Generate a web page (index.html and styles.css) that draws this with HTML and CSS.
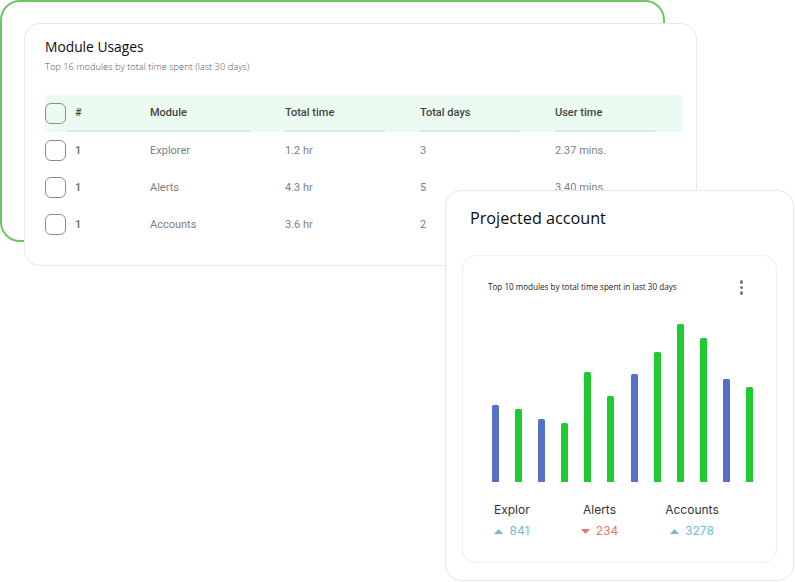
FILE: index.html
```html
<!DOCTYPE html>
<html>
<head>
<meta charset="utf-8">
<link rel="stylesheet" href="styles.css">
</head>
<body>
<div class="stage">
  <div class="green-frame"></div>

  <section class="card module-card">
    <h2 class="card-title">Module Usages</h2>
    <p class="card-sub">Top 16 modules by total time spent (last 30 days)</p>
    <div class="table">
      <div class="row head">
        <div class="cell check"><span class="box"></span></div>
        <div class="cell num">#</div>
        <div class="cell">Module</div>
        <div class="cell">Total time</div>
        <div class="cell">Total days</div>
        <div class="cell">User time</div>
      </div>
      <div class="row">
        <div class="cell check"><span class="box"></span></div>
        <div class="cell num">1</div>
        <div class="cell">Explorer</div>
        <div class="cell">1.2 hr</div>
        <div class="cell">3</div>
        <div class="cell">2.37 mins.</div>
      </div>
      <div class="row">
        <div class="cell check"><span class="box"></span></div>
        <div class="cell num">1</div>
        <div class="cell">Alerts</div>
        <div class="cell">4.3 hr</div>
        <div class="cell">5</div>
        <div class="cell">3.40 mins.</div>
      </div>
      <div class="row">
        <div class="cell check"><span class="box"></span></div>
        <div class="cell num">1</div>
        <div class="cell">Accounts</div>
        <div class="cell">3.6 hr</div>
        <div class="cell">2</div>
        <div class="cell">1.52 mins.</div>
      </div>
    </div>
  </section>

  <section class="card projected-card">
    <h2 class="proj-title">Projected account</h2>
    <div class="chart-card">
      <div class="chart-head">
        <span class="chart-sub">Top 10 modules by total time spent in last 30 days</span>
        <span class="kebab"><i></i><i></i><i></i></span>
      </div>
      <div class="bars">
        <span class="bar blue" style="height:77px"></span>
        <span class="bar green" style="height:73px"></span>
        <span class="bar blue" style="height:63px"></span>
        <span class="bar green" style="height:59px"></span>
        <span class="bar green" style="height:110px"></span>
        <span class="bar green" style="height:86px"></span>
        <span class="bar blue" style="height:108px"></span>
        <span class="bar green" style="height:130px"></span>
        <span class="bar green" style="height:158px"></span>
        <span class="bar green" style="height:144px"></span>
        <span class="bar blue" style="height:103px"></span>
        <span class="bar green" style="height:95px"></span>
      </div>
      <div class="legend">
        <div class="leg">
          <span class="leg-name">Explor</span>
          <span class="leg-val up"><svg width="9" height="5" viewBox="0 0 9 5"><polygon points="4.5,0 9,5 0,5"/></svg>841</span>
        </div>
        <div class="leg">
          <span class="leg-name">Alerts</span>
          <span class="leg-val down"><svg width="9" height="5" viewBox="0 0 9 5"><polygon points="0,0 9,0 4.5,5"/></svg>234</span>
        </div>
        <div class="leg">
          <span class="leg-name">Accounts</span>
          <span class="leg-val up"><svg width="9" height="5" viewBox="0 0 9 5"><polygon points="4.5,0 9,5 0,5"/></svg>3278</span>
        </div>
      </div>
    </div>
  </section>
</div>
</body>
</html>
```

FILE: styles.css
```css
* { box-sizing: border-box; }
html, body { margin: 0; padding: 0; background: #fff; }
.stage {
  position: relative;
  width: 795px;
  height: 582px;
  overflow: hidden;
  font-family: "Open Sans", "Liberation Sans", sans-serif;
}
.green-frame {
  position: absolute;
  left: 0; top: 0;
  width: 665px; height: 242px;
  border: 2px solid #6cc765;
  border-radius: 20px;
}
.card {
  position: absolute;
  background: #fff;
  border: 1px solid #e7e7e7;
  border-radius: 16px;
}
.module-card {
  left: 24px; top: 23px;
  width: 673px; height: 243px;
  padding: 14px 14px 0 20px;
}
.card-title {
  margin: 0;
  font-size: 13.8px;
  line-height: 18px;
  font-weight: 500;
  color: #0d0d0d;
}
.card-sub {
  margin: 5px 0 0;
  font-size: 9.3px;
  line-height: 12px;
  font-weight: 300;
  color: #555;
}
.table {
  margin-top: 22px;
  font-family: Roboto, "Liberation Sans", sans-serif;
  font-size: 11px;
}
.row {
  display: grid;
  grid-template-columns: 21px 84px 135px 135px 135px 1fr;
  height: 37px;
  color: #808080;
}
.cell {
  display: flex;
  align-items: center;
}
.row .cell:nth-child(n+3) { width: 100px; }
.row.head {
  background: #ebfbf1;
  color: #454545;
  font-weight: 500;
}
.row.head .cell:not(.check) { border-bottom: 2px solid #dfe7e2; }
.num { padding-left: 9px; font-weight: 500; color: #6a6a6a; }
.row.head .num { color: #454545; }
.box {
  display: block;
  width: 21px; height: 21px;
  border: 1px solid #8c8c8c;
  border-radius: 6px;
  background: #fff;
}
.row.head .box { background: transparent; }

.projected-card {
  left: 445px; top: 190px;
  width: 349px; height: 391px;
  padding: 17px 16px 0 16px;
}
.proj-title {
  margin: 0 0 0 8px;
  font-size: 16.2px;
  line-height: 20px;
  font-weight: 500;
  color: #0d0d0d;
}
.chart-card {
  margin-top: 27px;
  width: 315px;
  height: 308px;
  border: 1px solid #efefef;
  border-radius: 14px;
  padding: 25px 33px 0 25px;
}
.chart-head {
  display: flex;
  justify-content: space-between;
  align-items: center;
  height: 12px;
}
.chart-sub {
  font-size: 8.1px;
  line-height: 12px;
  color: #222;
  white-space: nowrap;
}
.kebab {
  display: flex;
  flex-direction: column;
  gap: 2px;
  margin-top: 1px;
}
.kebab i {
  display: block;
  width: 3.5px; height: 3.5px;
  border-radius: 50%;
  background: #7d7d7d;
}
.bars {
  display: flex;
  align-items: flex-end;
  gap: 16.1px;
  height: 189px;
  padding-left: 4px;
  margin-right: -20px;
}
.bar {
  display: block;
  flex: 0 0 7px;
  width: 7px;
  border-radius: 1.5px 1.5px 0 0;
}
.bar.blue { background: #5571c6; }
.bar.green { background: #1fcb2e; }
.legend {
  display: flex;
  margin-top: 20px;
  padding-left: 6px;
  font-family: Inter, "Liberation Sans", sans-serif;
  font-size: 12px;
}
.leg {
  display: flex;
  flex-direction: column;
  align-items: center;
}
.leg:nth-child(2) { margin-left: 51px; }
.leg:nth-child(3) { margin-left: 47px; }
.leg-name {
  line-height: 16px;
  color: #333;
}
.leg-val {
  margin-top: 4px;
  line-height: 16px;
  display: flex;
  align-items: center;
  gap: 6px;
  padding-top: 1px;
}
.leg-val.up { color: #71bcc7; }
.leg-val.up svg { fill: #71bcc7; }
.leg-val.down { color: #f36f6b; }
.leg-val.down svg { fill: #f36f6b; }
```
